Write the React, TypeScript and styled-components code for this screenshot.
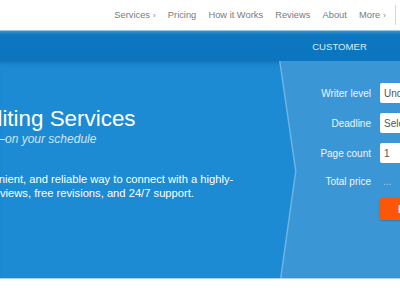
import styled, { createGlobalStyle } from "styled-components"

const navItems = [
  { label: "Services", more: true },
  { label: "Pricing" },
  { label: "How it Works" },
  { label: "Reviews" },
  { label: "About" },
  { label: "More", more: true },
]

const fields = [
  { label: "Writer level", value: "Undergraduate" },
  { label: "Deadline", value: "Select deadline" },
  { label: "Page count", value: "1" },
]

export default function App() {
  return (
    <>
      <Global />
      <Page>
        <Nav>
          {navItems.map(item => (
            <NavItem key={item.label}>
              {item.label}
              {item.more && <Caret>›</Caret>}
            </NavItem>
          ))}
          <NavDivider />
        </Nav>

        <Band>
          <BandSpacer />
          <Tabs>
            <Tab>CUSTOMER</Tab>
            <Tab>WRITER</Tab>
          </Tabs>
        </Band>

        <Hero>
          <Intro>
            <Title>Editing Services</Title>
            <Subtitle>—on your schedule</Subtitle>
            <Text>
              <Line $shift={-31}>convenient, and reliable way to connect with a highly-</Line>
              <Line $shift={-10}>reviews, free revisions, and 24/7 support.</Line>
            </Text>
          </Intro>

          <Panel>
            <Form>
              {fields.map(f => (
                <Row key={f.label}>
                  <Label>{f.label}</Label>
                  <Field>{f.value}</Field>
                </Row>
              ))}
              <Row $short>
                <Label>Total price</Label>
                <Price>...</Price>
              </Row>
              <Row>
                <Label />
                <Button type="button">Proceed</Button>
              </Row>
            </Form>
          </Panel>
        </Hero>
        <Bottom />
      </Page>
    </>
  )
}

//style

const Global = createGlobalStyle`
  html, body {
    margin: 0;
    padding: 0;
    background: #fff;
    overflow: hidden;
  }
  body {
    font-family: "Liberation Sans", Arial, sans-serif;
  }
`

const Page = styled.div`
  width: 100%;
  overflow: hidden;
`
const Nav = styled.nav`
  display: flex;
  justify-content: flex-end;
  align-items: center;
  height: 30px;
  padding-right: 4px;
  background: #fff;
`
const NavItem = styled.a`
  display: flex;
  align-items: center;
  padding: 0 6.1px;
  font-size: 9.3px;
  color: #7a7a7a;
  white-space: nowrap;
`
const Caret = styled.span`
  margin-left: 3px;
  font-size: 8px;
`
const NavDivider = styled.span`
  width: 1px;
  height: 20px;
  margin-left: 3px;
  background: #d8d8d8;
`
const Band = styled.div`
  display: flex;
  height: 30px;
  border-top: 1px solid #9cc8e8;
  background: linear-gradient(#3b8fcc 0, #0c77bf 4px, #0b76bf 100%);
  overflow: hidden;
`
const BandSpacer = styled.div`
  width: 279px;
  flex-shrink: 0;
`
const Tabs = styled.div`
  display: flex;
  flex-shrink: 0;
  width: 242px;
`
const Tab = styled.div`
  display: flex;
  align-items: center;
  justify-content: center;
  width: 121px;
  font-size: 9.6px;
  color: #dcecf8;
`
const Hero = styled.div`
  display: flex;
  height: 217px;
  background: #1c8bd4;
  box-shadow: inset 0 5px 4px -3px rgba(0, 40, 90, 0.25);
  overflow: hidden;
`
const Intro = styled.div`
  width: 279px;
  flex-shrink: 0;
  overflow: hidden;
  padding-top: 45px;
  color: #fff;
`
const Title = styled.h1`
  margin: 0 0 0 -25px;
  font-size: 22.4px;
  font-weight: normal;
  line-height: 26px;
  white-space: nowrap;
`
const Subtitle = styled.p`
  margin: -1px 0 0 -7px;
  font-size: 12px;
  font-style: italic;
  line-height: 16px;
  color: #cfe5f6;
  white-space: nowrap;
`
const Text = styled.div`
  margin-top: 25px;
  font-size: 11.2px;
  line-height: 14px;
`
const Line = styled.div<{ $shift: number }>`
  margin-left: ${p => p.$shift}px;
  white-space: nowrap;
`
const Panel = styled.div`
  position: relative;
  flex-shrink: 0;
  width: 242px;
  &::before,
  &::after {
    content: "";
    position: absolute;
    inset: 0;
  }
  &::before {
    background: #6eb3e3;
    clip-path: polygon(0 0, 100% 0, 100% 100%, 1px 100%, 16px 110px);
  }
  &::after {
    background: #3a96d5;
    clip-path: polygon(1.5px 0, 100% 0, 100% 100%, 2.5px 100%, 17.5px 110px);
  }
`
const Form = styled.div`
  position: relative;
  z-index: 1;
  display: flex;
  flex-direction: column;
  gap: 10px;
  padding-top: 22px;
`
const Row = styled.div<{ $short?: boolean }>`
  display: flex;
  align-items: center;
  gap: 9px;
  height: ${p => (p.$short ? "16px" : "20px")};
`
const Label = styled.div`
  width: 92px;
  text-align: right;
  font-size: 10px;
  color: #eef6fc;
  white-space: nowrap;
`
const Field = styled.div`
  display: flex;
  align-items: center;
  width: 110px;
  height: 20px;
  padding: 0 4px;
  box-sizing: border-box;
  background: #fff;
  border-radius: 2px;
  font-size: 10px;
  color: #555;
  white-space: nowrap;
`
const Price = styled.div`
  padding-left: 3px;
  font-size: 10px;
  color: #a8d0ee;
`
const Button = styled.button`
  height: 22px;
  padding: 0 18px;
  border: none;
  border-radius: 2px;
  background: #fb5707;
  box-shadow: 0 1px 2px rgba(0, 0, 0, 0.2);
  font-family: "Liberation Sans", Arial, sans-serif;
  font-size: 11px;
  font-weight: bold;
  color: #fff;
`
const Bottom = styled.div`
  height: 23px;
  border-top: 1px solid #a6d2ef;
  background: #fff;
`
